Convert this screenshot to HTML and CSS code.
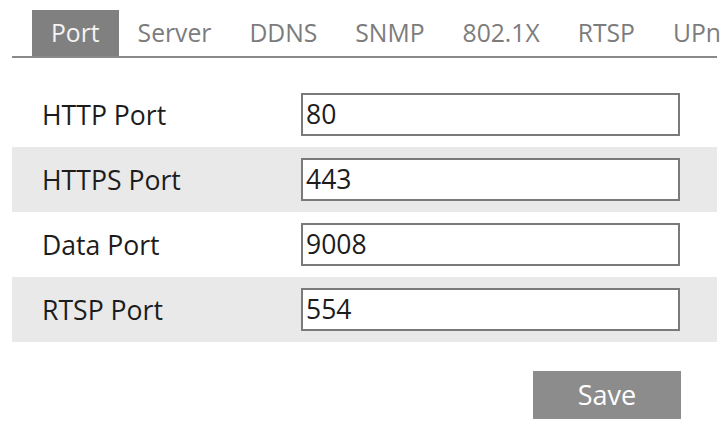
FILE: index.html
```html
<!DOCTYPE html>
<html>
<head>
<meta charset="utf-8">
<link rel="stylesheet" href="styles.css">
</head>
<body>
<div class="page">
  <div class="tabs">
    <div class="tab active">Port</div>
    <div class="tab">Server</div>
    <div class="tab">DDNS</div>
    <div class="tab">SNMP</div>
    <div class="tab">802.1X</div>
    <div class="tab">RTSP</div>
    <div class="tab">UPnP</div>
  </div>
  <div class="form">
    <div class="row">
      <label class="label">HTTP Port</label>
      <div class="field">80</div>
    </div>
    <div class="row alt">
      <label class="label">HTTPS Port</label>
      <div class="field">443</div>
    </div>
    <div class="row">
      <label class="label">Data Port</label>
      <div class="field">9008</div>
    </div>
    <div class="row alt">
      <label class="label">RTSP Port</label>
      <div class="field">554</div>
    </div>
  </div>
  <div class="actions">
    <div class="btn">Save</div>
  </div>
</div>
</body>
</html>
```

FILE: styles.css
```css
html, body {
  margin: 0;
  padding: 0;
  background: #fff;
  overflow: hidden;
}
body {
  font-family: "Open Sans", "Noto Sans", sans-serif;
}
.page {
  width: 705px;
  margin-left: 12px;
  padding-top: 10px;
}
.tabs {
  display: flex;
  height: 46px;
  padding-left: 20px;
  border-bottom: 2px solid #8a8a8a;
  white-space: nowrap;
}
.tab {
  padding: 0 19px;
  font-size: 24.7px;
  line-height: 46px;
  color: #7c7c7c;
  flex: none;
}
.tab.active {
  background: #808080;
  color: #f4f4f4;
}
.form {
  margin-top: 24px;
}
.row {
  display: flex;
  align-items: center;
  height: 65px;
  padding-left: 30px;
}
.row.alt {
  background: #e9e9e9;
}
.label {
  width: 259px;
  font-size: 26.6px;
  color: #1c1c1c;
}
.field {
  box-sizing: border-box;
  width: 379px;
  height: 43px;
  border: 2px solid #7a7a7a;
  background: #fff;
  padding-left: 3px;
  font-size: 26.5px;
  line-height: 39px;
  color: #1c1c1c;
}
.actions {
  display: flex;
  justify-content: flex-end;
  padding-right: 36px;
  margin-top: 29px;
}
.btn {
  width: 148px;
  height: 48px;
  background: #8c8c8c;
  color: #fff;
  font-size: 27px;
  line-height: 48px;
  text-align: center;
}
```
